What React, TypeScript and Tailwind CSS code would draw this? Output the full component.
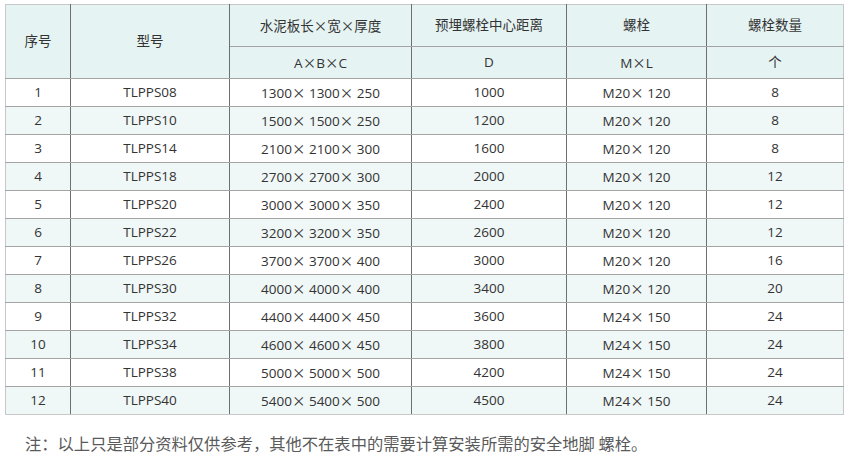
import React from "react";

const rows: [string, string, string, string, string, string][] = [
  ["1", "TLPPS08", "1300× 1300× 250", "1000", "M20× 120", "8"],
  ["2", "TLPPS10", "1500× 1500× 250", "1200", "M20× 120", "8"],
  ["3", "TLPPS14", "2100× 2100× 300", "1600", "M20× 120", "8"],
  ["4", "TLPPS18", "2700× 2700× 300", "2000", "M20× 120", "12"],
  ["5", "TLPPS20", "3000× 3000× 350", "2400", "M20× 120", "12"],
  ["6", "TLPPS22", "3200× 3200× 350", "2600", "M20× 120", "12"],
  ["7", "TLPPS26", "3700× 3700× 400", "3000", "M20× 120", "16"],
  ["8", "TLPPS30", "4000× 4000× 400", "3400", "M20× 120", "20"],
  ["9", "TLPPS32", "4400× 4400× 450", "3600", "M24× 150", "24"],
  ["10", "TLPPS34", "4600× 4600× 450", "3800", "M24× 150", "24"],
  ["11", "TLPPS38", "5000× 5000× 500", "4200", "M24× 150", "24"],
  ["12", "TLPPS40", "5400× 5400× 500", "4500", "M24× 150", "24"],
];

const cjk = '"Noto Sans CJK SC", sans-serif';

function T({ s }: { s: string }) {
  const parts = s.split("×");
  return (
    <>
      {parts.map((p, i) => (
        <React.Fragment key={i}>
          {i > 0 && <span style={{ fontFamily: cjk }}>×</span>}
          {p}
        </React.Fragment>
      ))}
    </>
  );
}

const cell =
  "p-0 text-center align-middle border border-x-[#6f6f6f] border-y-[#a4a4a4]";

export default function App() {
  return (
    <div
      className="w-[850px] h-[475px] bg-white pt-[4px] pl-[5px]"
      style={{ fontFamily: '"Open Sans", "Noto Sans CJK SC", sans-serif' }}
    >
      <table className="border-collapse table-fixed w-[838px] text-[13.5px] text-[#333]">
        <colgroup>
          <col className="w-[65px]" />
          <col className="w-[159px]" />
          <col className="w-[182px]" />
          <col className="w-[155px]" />
          <col className="w-[140px]" />
          <col className="w-[137px]" />
        </colgroup>
        <thead>
          <tr className="h-[42px] bg-[#e6f3f3]">
            <th rowSpan={2} className={`${cell} font-normal border-l-[#c8c8c8] border-t-[#c8c8c8]`}>
              序号
            </th>
            <th rowSpan={2} className={`${cell} font-normal border-t-[#c8c8c8]`}>
              型号
            </th>
            <th className={`${cell} font-normal border-t-[#c8c8c8]`}>
              <T s="水泥板长×宽×厚度" />
            </th>
            <th className={`${cell} font-normal border-t-[#c8c8c8]`}>预埋螺栓中心距离</th>
            <th className={`${cell} font-normal border-t-[#c8c8c8]`}>螺栓</th>
            <th className={`${cell} font-normal border-t-[#c8c8c8] border-r-[#c8c8c8]`}>螺栓数量</th>
          </tr>
          <tr className="h-[32px] bg-[#e6f3f3]">
            <th className={`${cell} font-normal`}>
              <T s="A×B×C" />
            </th>
            <th className={`${cell} font-normal`}>D</th>
            <th className={`${cell} font-normal`}>
              <T s="M×L" />
            </th>
            <th className={`${cell} font-normal border-r-[#c8c8c8]`}>个</th>
          </tr>
        </thead>
        <tbody>
          {rows.map((r, i) => (
            <tr key={r[0]} className={`h-[28px] ${i % 2 === 1 ? "bg-[#eff7f7]" : "bg-white"}`}>
              {r.map((c, j) => (
                <td
                  key={j}
                  className={`${cell} ${j === 0 ? "border-l-[#c8c8c8]" : ""} ${
                    j === 5 ? "border-r-[#c8c8c8]" : ""
                  } ${i === rows.length - 1 ? "border-b-[#c8c8c8]" : ""}`}
                >
                  <T s={c} />
                </td>
              ))}
            </tr>
          ))}
        </tbody>
      </table>
      <p
        className="mt-[16px] pl-[20px] text-[16.3px] text-[#5a5a5a] leading-[24px]"
        style={{ fontFamily: cjk }}
      >
        注：以上只是部分资料仅供参考，其他不在表中的需要计算安装所需的安全地脚 螺栓。
      </p>
    </div>
  );
}
